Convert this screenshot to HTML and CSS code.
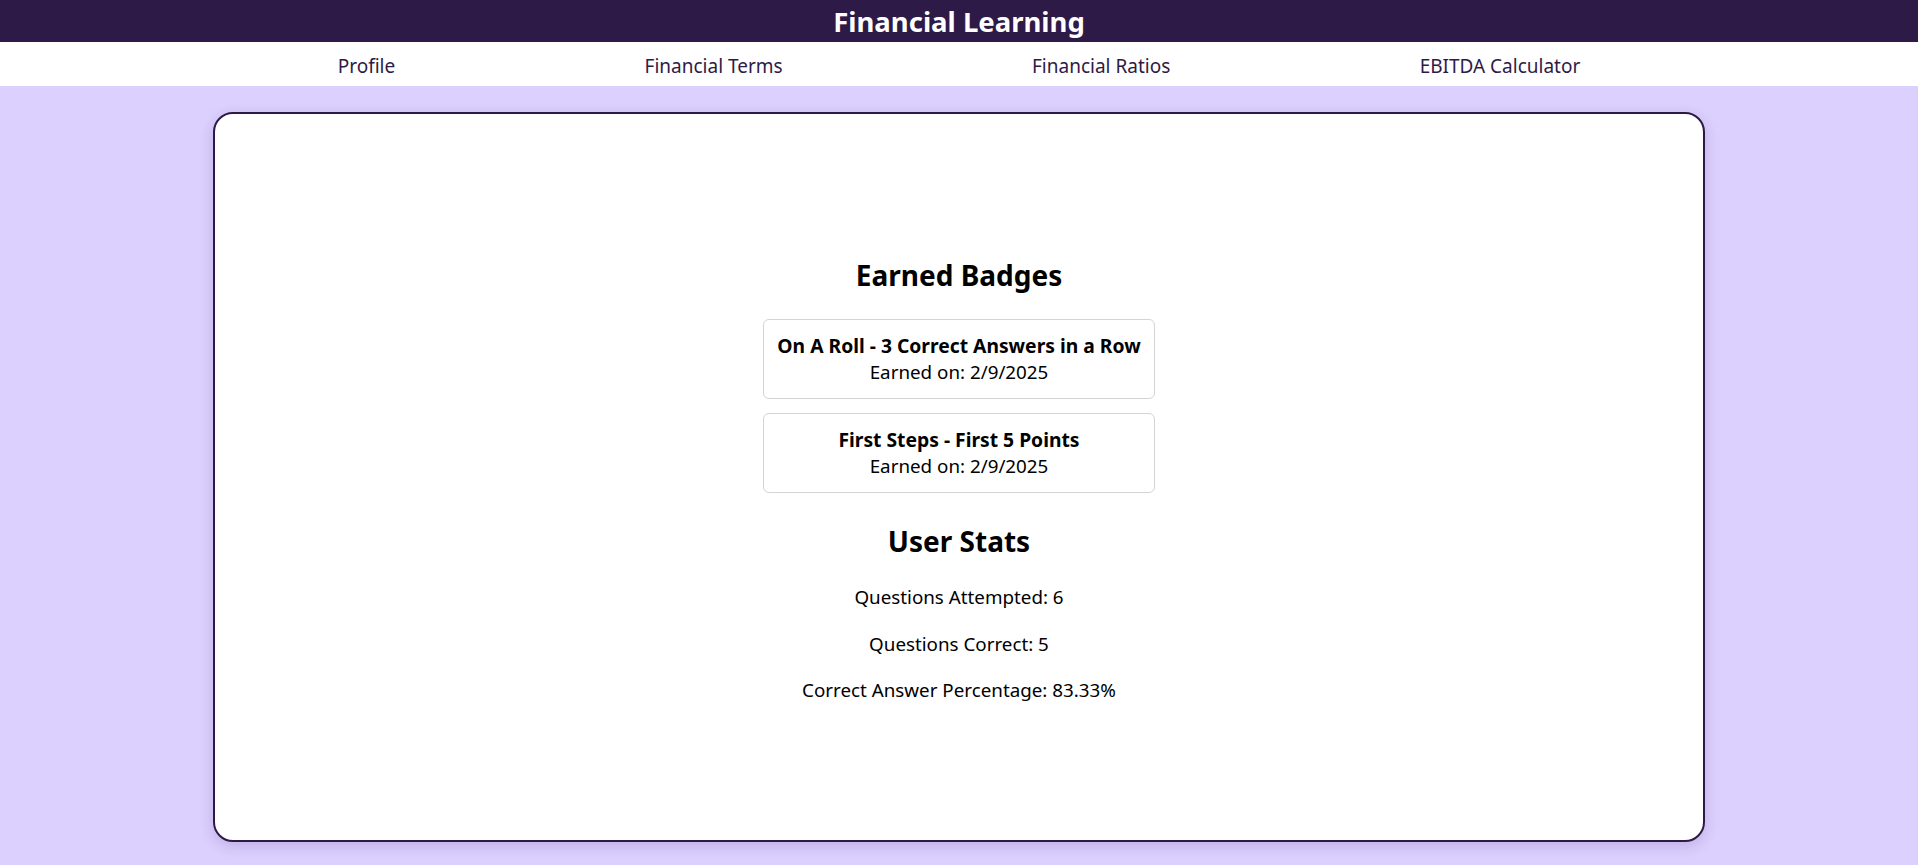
FILE: index.html
```html
<!DOCTYPE html>
<html lang="en">
<head>
<meta charset="utf-8">
<title>Financial Learning</title>
<link rel="stylesheet" href="styles.css">
</head>
<body>
<header class="site-header">
  <h1 class="site-title">Financial Learning</h1>
</header>
<nav class="site-nav">
  <ul class="nav-list">
    <li><a class="nav-link" href="#">Profile</a></li>
    <li><a class="nav-link" href="#">Financial Terms</a></li>
    <li><a class="nav-link" href="#">Financial Ratios</a></li>
    <li><a class="nav-link" href="#">EBITDA Calculator</a></li>
  </ul>
</nav>
<main class="page">
  <section class="card">
    <div class="content">
      <h2 class="section-title section-title--first">Earned Badges</h2>
      <div class="badges">
        <div class="badge">
          <div class="badge-name">On A Roll - 3 Correct Answers in a Row</div>
          <div class="badge-date">Earned on: 2/9/2025</div>
        </div>
        <div class="badge">
          <div class="badge-name">First Steps - First 5 Points</div>
          <div class="badge-date">Earned on: 2/9/2025</div>
        </div>
      </div>
      <h2 class="section-title section-title--second">User Stats</h2>
      <p class="stat">Questions Attempted: 6</p>
      <p class="stat">Questions Correct: 5</p>
      <p class="stat">Correct Answer Percentage: 83.33%</p>
    </div>
  </section>
</main>
</body>
</html>
```
FILE: styles.css
```css
* { box-sizing: border-box; }
html, body { margin: 0; padding: 0; }
body {
  background: #dcd0fe;
  font-family: "Segoe UI", "Noto Sans", "Open Sans", sans-serif;
  color: #000;
  height: 865px;
  overflow: hidden;
}
.site-header {
  background: #2e1a47;
  height: 42px;
  display: flex;
  align-items: center;
  justify-content: center;
}
.site-title {
  margin: 0;
  padding-top: 2px;
  color: #fff;
  font-size: 27.5px;
  font-weight: 700;
  line-height: 40px;
}
.site-nav {
  background: #fff;
  height: 44px;
}
.nav-list {
  list-style: none;
  margin: 0 auto;
  padding: 4px 0 0;
  width: 1492px;
  height: 44px;
  display: flex;
  justify-content: space-around;
  align-items: center;
}
.nav-link {
  color: #2e1a47;
  text-decoration: none;
  font-size: 19px;
}
.page {
  padding-top: 26px;
}
.card {
  width: 1492px;
  height: 730px;
  margin: 0 auto;
  padding-top: 17px;
  background: #fff;
  border: 2px solid #2e1a47;
  border-radius: 20px;
  box-shadow: 0 4px 14px rgba(60, 30, 110, 0.18);
  display: flex;
  align-items: center;
  justify-content: center;
}
.content {
  display: flex;
  flex-direction: column;
  align-items: center;
  text-align: center;
}
.section-title {
  font-size: 28px;
  font-weight: 700;
  line-height: 1.3;
  margin: 0;
}
.section-title--first { margin-bottom: 25px; }
.section-title--second { margin-top: 30px; margin-bottom: 15px; }
.badges {
  display: flex;
  flex-direction: column;
  align-items: stretch;
  gap: 14px;
}
.badge {
  border: 1px solid #d4d4d4;
  border-radius: 6px;
  padding: 12px 13px;
  font-size: 18.8px;
  line-height: 27px;
}
.badge-name { font-weight: 700; font-size: 19.3px; }
.stat {
  font-size: 18.8px;
  line-height: 28.5px;
  margin: 9px 0;
}
```
